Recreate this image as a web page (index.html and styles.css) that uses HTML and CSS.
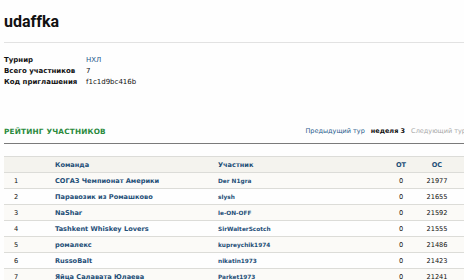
FILE: index.html
```html
<!DOCTYPE html>
<html lang="ru">
<head>
<meta charset="utf-8">
<link rel="stylesheet" href="styles.css">
</head>
<body>
<div class="page">
  <h1 class="title">udaffka</h1>
  <div class="rule"></div>
  <table class="info">
    <tr><th>Турнир</th><td><a class="link">НХЛ</a></td></tr>
    <tr><th>Всего участников</th><td>7</td></tr>
    <tr><th>Код приглашения</th><td>f1c1d9bc416b</td></tr>
  </table>
  <div class="section-head">
    <h2 class="section-title">РЕЙТИНГ УЧАСТНИКОВ</h2>
    <nav class="tours">
      <a class="link">Предыдущий тур</a>
      <b class="cur">неделя 3</b>
      <span class="next">Следующий тур</span>
    </nav>
  </div>
  <table class="rating">
    <thead>
      <tr><th class="n"></th><th class="team">Команда</th><th class="user">Участник</th><th class="ot">ОТ</th><th class="os">ОС</th></tr>
    </thead>
    <tbody>
      <tr><td class="n">1</td><td class="team"><a>СОГАЗ Чемпионат Америки</a></td><td class="user"><a>Der N1gra</a></td><td class="ot">0</td><td class="os">21977</td></tr>
      <tr><td class="n">2</td><td class="team"><a>Паравозик из Ромашково</a></td><td class="user"><a>slysh</a></td><td class="ot">0</td><td class="os">21655</td></tr>
      <tr><td class="n">3</td><td class="team"><a>NaShar</a></td><td class="user"><a>le-ON-OFF</a></td><td class="ot">0</td><td class="os">21592</td></tr>
      <tr><td class="n">4</td><td class="team"><a>Tashkent Whiskey Lovers</a></td><td class="user"><a>SirWalterScotch</a></td><td class="ot">0</td><td class="os">21555</td></tr>
      <tr><td class="n">5</td><td class="team"><a>ромалекс</a></td><td class="user"><a>kupreychik1974</a></td><td class="ot">0</td><td class="os">21486</td></tr>
      <tr><td class="n">6</td><td class="team"><a>RussoBalt</a></td><td class="user"><a>nikatin1973</a></td><td class="ot">0</td><td class="os">21423</td></tr>
      <tr><td class="n">7</td><td class="team"><a>Яйца Салавата Юлаева</a></td><td class="user"><a>Parket1973</a></td><td class="ot">0</td><td class="os">21241</td></tr>
    </tbody>
  </table>
</div>
</body>
</html>
```
FILE: styles.css
```css
html, body {
  margin: 0;
  padding: 0;
  background: #fefefe;
  overflow: hidden;
}
body {
  font-family: "DejaVu Sans", Verdana, sans-serif;
  color: #111;
  width: 464px;
  height: 280px;
}
.page {
  width: 462px;
  padding: 0 0 0 4px;
}
.title {
  margin: 0;
  padding-top: 12px;
  height: 20px;
  margin-bottom: 10px;
  font-family: Roboto, "DejaVu Sans", sans-serif;
  font-size: 16px;
  line-height: 20px;
  font-weight: bold;
}
.rule {
  height: 1px;
  background: #e2e2e2;
  margin-right: 2px;
}
.info {
  border-collapse: collapse;
  margin-top: 11px;
  font-size: 7px;
}
.info th {
  text-align: left;
  font-weight: bold;
  padding: 0;
  width: 82px;
  height: 11px;
}
.info td {
  padding: 0;
  height: 11px;
}
.link {
  color: #1e5a8c;
}
.section-head {
  display: flex;
  align-items: center;
  justify-content: space-between;
  margin-top: 37px;
  height: 14px;
  padding-bottom: 5px;
  border-bottom: 1px solid #7a7a7a;
  margin-right: -20px;
}
.section-title {
  margin: 0;
  font-size: 7.3px;
  font-weight: bold;
  color: #2a8a3c;
  letter-spacing: 0.2px;
}
.tours {
  display: flex;
  gap: 6px;
  font-size: 6.5px;
  padding-right: 20px;
}
.cur {
  color: #111;
}
.next {
  color: #a8a8a8;
}
.rating {
  border-collapse: collapse;
  table-layout: fixed;
  margin-top: 12px;
  width: 462px;
  font-size: 6.6px;
}
.rating th, .rating td {
  padding: 0;
  height: 15px;
  border-top: 1px solid #dcdcd8;
  text-align: left;
  white-space: nowrap;
}
.rating thead th {
  background: #f4f3ee;
  color: #1e4f78;
  font-weight: bold;
}
.rating tbody tr {
  background: #fbfaf7;
}
.rating tbody tr:nth-child(even) {
  background: #fefefe;
}
.rating a {
  color: #1e4f78;
  font-weight: bold;
}
.rating .n {
  width: 41px;
  padding-left: 10px;
}
.rating .team {
  width: 163px;
}
.rating .user {
  width: 167px;
}
.rating .user a {
  font-size: 5.8px;
}
.rating .ot {
  width: 32px;
  text-align: center;
}
.rating .os {
  width: 40px;
  padding-right: 9px;
  text-align: center;
}
```
